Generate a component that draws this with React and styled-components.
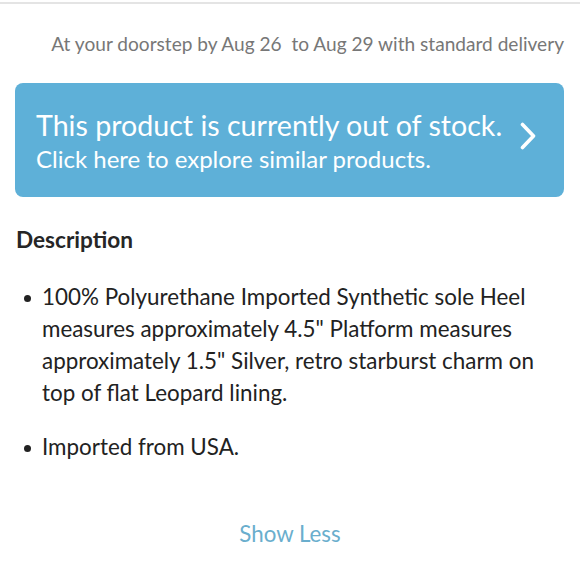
import React from "react";
import styled, { createGlobalStyle } from "styled-components";

const Global = createGlobalStyle`
  html, body { margin: 0; padding: 0; background: #fff; }
  body { font-family: Lato, "Noto Sans", sans-serif; }
`;

const Page = styled.div`
  width: 580px;
  height: 579px;
  box-sizing: border-box;
  border-top: 2px solid #e4e4e4;
  margin-top: 2px;
  display: flex;
  flex-direction: column;
  overflow: hidden;
`;

const Delivery = styled.div`
  padding: 27px 16px 0 0;
  text-align: right;
  font-size: 19.1px;
  color: #777;
  line-height: 26px;
  white-space: pre;
`;

const Banner = styled.a`
  margin: 26px 16px 0 15px;
  height: 114px;
  box-sizing: border-box;
  border-radius: 8px;
  background: #5eb0d8;
  color: #fff;
  display: flex;
  align-items: center;
  padding: 0 28px 0 21px;
  text-decoration: none;
`;

const BannerText = styled.div`
  flex: 1;
  display: flex;
  flex-direction: column;
  gap: 1px;
`;

const BannerTitle = styled.div`
  font-size: 28.6px;
  line-height: 36px;
`;

const BannerSub = styled.div`
  font-size: 24px;
  line-height: 30px;
`;

const Chevron = styled.svg`
  flex: none;
  margin-top: -8px;
`;

const Heading = styled.h3`
  margin: 29px 0 0 16px;
  font-size: 22.6px;
  font-weight: 700;
  color: #262626;
  line-height: 28px;
`;

const List = styled.ul`
  margin: 27px 16px 0 0;
  padding: 0 0 0 42px;
  list-style: none;
  display: flex;
  flex-direction: column;
  gap: 22px;
`;

const Item = styled.li`
  position: relative;
  font-size: 22.4px;
  line-height: 32px;
  color: #222;
  &::before {
    content: "";
    position: absolute;
    left: -18px;
    top: 14px;
    width: 7px;
    height: 7px;
    border-radius: 50%;
    background: #222;
  }
`;

const ShowLess = styled.button`
  margin: 57px auto 0;
  border: 0;
  background: none;
  font-family: inherit;
  font-size: 22.3px;
  color: #6aaecd;
  padding: 0;
  line-height: 28px;
`;

export default function App() {
  return (
    <>
      <Global />
      <Page>
        <Delivery>{"At your doorstep by Aug 26  to Aug 29 with standard delivery"}</Delivery>
        <Banner href="#">
          <BannerText>
            <BannerTitle>This product is currently out of stock.</BannerTitle>
            <BannerSub>Click here to explore similar products.</BannerSub>
          </BannerText>
          <Chevron width="16" height="28" viewBox="0 0 16 28" fill="none">
            <path d="M2.5 2.5 L13.5 14 L2.5 25.5" stroke="#fff" strokeWidth="3.6" strokeLinecap="round" strokeLinejoin="round" />
          </Chevron>
        </Banner>
        <Heading>Description</Heading>
        <List>
          <Item>
            100% Polyurethane Imported Synthetic sole Heel measures approximately 4.5" Platform measures approximately 1.5" Silver, retro starburst charm on top of flat Leopard lining.
          </Item>
          <Item>Imported from USA.</Item>
        </List>
        <ShowLess>Show Less</ShowLess>
      </Page>
    </>
  );
}
